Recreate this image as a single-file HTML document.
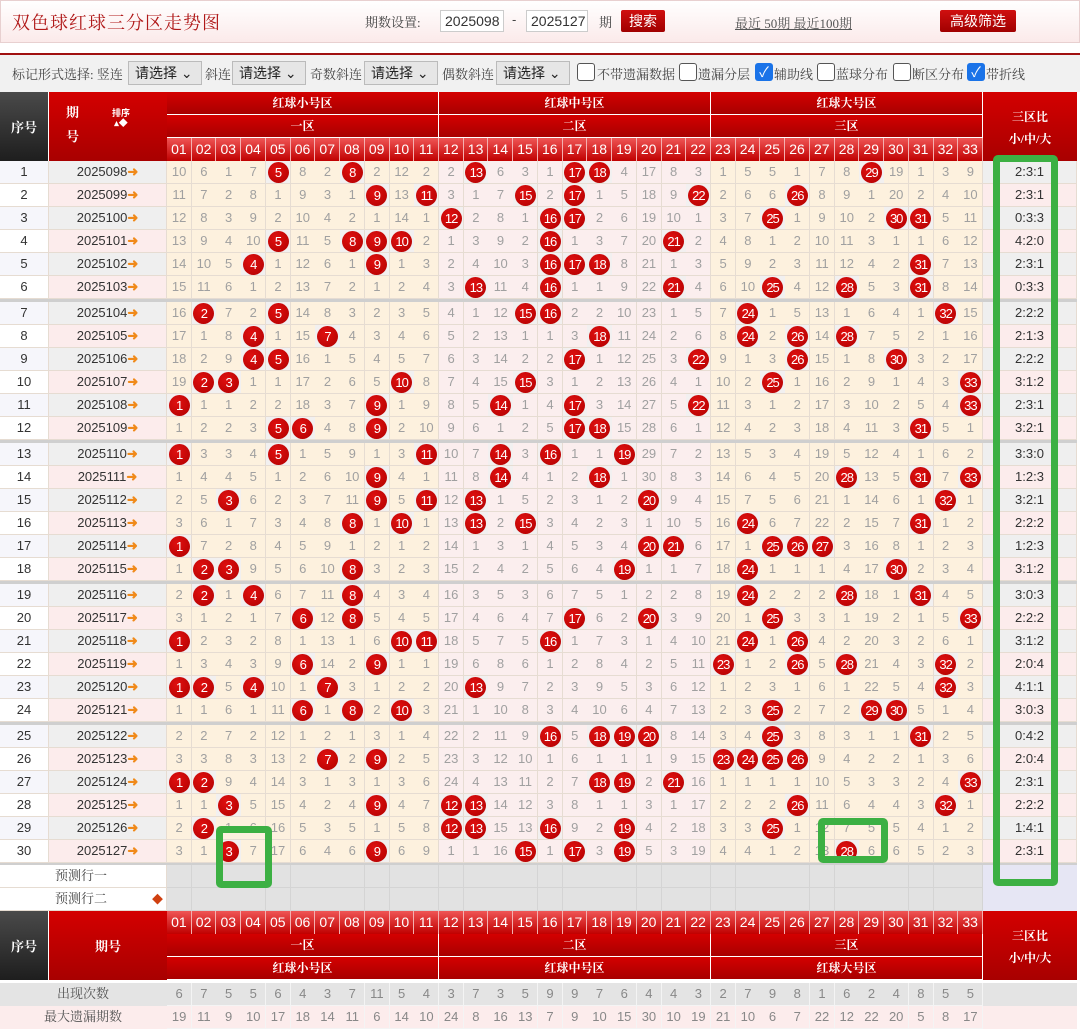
<!DOCTYPE html>
<html><head><meta charset="utf-8">
<style>
*{box-sizing:border-box;margin:0;padding:0}
body{width:1080px;height:1028px;position:relative;overflow:hidden;background:#fff;font-family:"Liberation Sans","Noto Sans CJK SC",sans-serif;font-size:13px;color:#333}
.a{position:absolute}
.sf{font-family:"Liberation Serif","Noto Serif CJK SC",serif}
.top{left:0;top:0;width:1080px;height:43px;background:linear-gradient(#fff,#fbeaea);border:1px solid #e8d0d0}
.title{left:12px;top:9px;font-size:18px;color:#b01818;letter-spacing:1px}
.inp{height:22px;border:1px solid #ccc;background:#fff;font-size:14px;line-height:20px;padding-left:4px;color:#333}
.btn{background:linear-gradient(#d01010,#a00000);color:#fff;text-align:center;border-radius:2px;font-size:14px}
.fb{left:0;top:53px;width:1080px;height:39px;background:#f1f1f1;border-top:2px solid #a01010}
.sel{height:24px;border:1px solid #bbb;background:#e6e6e6;font-size:14px;line-height:22px;padding-left:6px;color:#222}
.cb{width:18px;height:18px;border:1px solid #555;background:#fff;border-radius:3px}
.cbk{width:18px;height:18px;background:#1a73e8;border-radius:3px;color:#fff;font-size:14px;line-height:18px;text-align:center}
.hr{background:linear-gradient(#d40000,#a80000);color:#fff;text-align:center;font-weight:bold}
.hn{background:linear-gradient(#ef5555,#c00000);color:#fff;text-align:center;border-right:1px solid #f4b0b0;font-size:14px}
.c{position:absolute;text-align:center;color:#a0a0a0;border-right:1px solid #e6dcd2;border-bottom:1px solid #e6dcd2;line-height:22px;font-size:13px}
.b{display:inline-block;width:21px;height:21px;border-radius:50%;background:radial-gradient(circle at 40% 35%,#e01010,#b00000);color:#fff;line-height:21px;font-size:13px;letter-spacing:-1px;margin-top:1px}
.g{position:absolute;border:7px solid #3cb043;border-radius:5px}
</style></head><body>
<div class="a top"></div>
<div class="a title sf">双色球红球三分区走势图</div>
<div class="a sf" style="left:365px;top:12px;font-size:13px;color:#444">期数设置:</div>
<div class="a inp" style="left:440px;top:10px;width:64px">2025098</div>
<div class="a" style="left:512px;top:12px;color:#444">-</div>
<div class="a inp" style="left:526px;top:10px;width:62px">2025127</div>
<div class="a sf" style="left:599px;top:12px;color:#444">期</div>
<div class="a btn" style="left:621px;top:10px;width:44px;height:22px;line-height:22px">搜索</div>
<div class="a sf" style="left:735px;top:13px;color:#555;text-decoration:underline;font-size:13px">最近 50期 最近100期</div>
<div class="a btn" style="left:940px;top:10px;width:76px;height:22px;line-height:22px">高级筛选</div>
<div class="a fb"></div>
<div class="a sf" style="left:12px;top:64px;color:#444;font-size:13px">标记形式选择: 竖连</div>
<div class="a sel" style="left:128px;top:61px;width:74px">请选择 ⌄</div>
<div class="a sf" style="left:205px;top:64px;color:#444">斜连</div>
<div class="a sel" style="left:232px;top:61px;width:74px">请选择 ⌄</div>
<div class="a sf" style="left:310px;top:64px;color:#444">奇数斜连</div>
<div class="a sel" style="left:364px;top:61px;width:74px">请选择 ⌄</div>
<div class="a sf" style="left:442px;top:64px;color:#444">偶数斜连</div>
<div class="a sel" style="left:496px;top:61px;width:74px">请选择 ⌄</div>
<div class="a cb" style="left:577px;top:63px"></div><div class="a sf" style="left:597px;top:64px;color:#444">不带遗漏数据</div>
<div class="a cb" style="left:679px;top:63px"></div><div class="a sf" style="left:698px;top:64px;color:#444">遗漏分层</div>
<div class="a cbk" style="left:755px;top:63px">✓</div><div class="a sf" style="left:774px;top:64px;color:#444">辅助线</div>
<div class="a cb" style="left:817px;top:63px"></div><div class="a sf" style="left:836px;top:64px;color:#444">蓝球分布</div>
<div class="a cb" style="left:893px;top:63px"></div><div class="a sf" style="left:912px;top:64px;color:#444">断区分布</div>
<div class="a cbk" style="left:967px;top:63px">✓</div><div class="a sf" style="left:986px;top:64px;color:#444">带折线</div>
<div id="T"></div>
<script>
const D=[
"10 6 1 7 *5 8 2 *8 2 12 2 2 *13 6 3 1 *17 *18 4 17 8 3 1 5 5 1 7 8 *29 19 1 3 9|2:3:1",
"11 7 2 8 1 9 3 1 *9 13 *11 3 1 7 *15 2 *17 1 5 18 9 *22 2 6 6 *26 8 9 1 20 2 4 10|2:3:1",
"12 8 3 9 2 10 4 2 1 14 1 *12 2 8 1 *16 *17 2 6 19 10 1 3 7 *25 1 9 10 2 *30 *31 5 11|0:3:3",
"13 9 4 10 *5 11 5 *8 *9 *10 2 1 3 9 2 *16 1 3 7 20 *21 2 4 8 1 2 10 11 3 1 1 6 12|4:2:0",
"14 10 5 *4 1 12 6 1 *9 1 3 2 4 10 3 *16 *17 *18 8 21 1 3 5 9 2 3 11 12 4 2 *31 7 13|2:3:1",
"15 11 6 1 2 13 7 2 1 2 4 3 *13 11 4 *16 1 1 9 22 *21 4 6 10 *25 4 12 *28 5 3 *31 8 14|0:3:3",
"16 *2 7 2 *5 14 8 3 2 3 5 4 1 12 *15 *16 2 2 10 23 1 5 7 *24 1 5 13 1 6 4 1 *32 15|2:2:2",
"17 1 8 *4 1 15 *7 4 3 4 6 5 2 13 1 1 3 *18 11 24 2 6 8 *24 2 *26 14 *28 7 5 2 1 16|2:1:3",
"18 2 9 *4 *5 16 1 5 4 5 7 6 3 14 2 2 *17 1 12 25 3 *22 9 1 3 *26 15 1 8 *30 3 2 17|2:2:2",
"19 *2 *3 1 1 17 2 6 5 *10 8 7 4 15 *15 3 1 2 13 26 4 1 10 2 *25 1 16 2 9 1 4 3 *33|3:1:2",
"*1 1 1 2 2 18 3 7 *9 1 9 8 5 *14 1 4 *17 3 14 27 5 *22 11 3 1 2 17 3 10 2 5 4 *33|2:3:1",
"1 2 2 3 *5 *6 4 8 *9 2 10 9 6 1 2 5 *17 *18 15 28 6 1 12 4 2 3 18 4 11 3 *31 5 1|3:2:1",
"*1 3 3 4 *5 1 5 9 1 3 *11 10 7 *14 3 *16 1 1 *19 29 7 2 13 5 3 4 19 5 12 4 1 6 2|3:3:0",
"1 4 4 5 1 2 6 10 *9 4 1 11 8 *14 4 1 2 *18 1 30 8 3 14 6 4 5 20 *28 13 5 *31 7 *33|1:2:3",
"2 5 *3 6 2 3 7 11 *9 5 *11 12 *13 1 5 2 3 1 2 *20 9 4 15 7 5 6 21 1 14 6 1 *32 1|3:2:1",
"3 6 1 7 3 4 8 *8 1 *10 1 13 *13 2 *15 3 4 2 3 1 10 5 16 *24 6 7 22 2 15 7 *31 1 2|2:2:2",
"*1 7 2 8 4 5 9 1 2 1 2 14 1 3 1 4 5 3 4 *20 *21 6 17 1 *25 *26 *27 3 16 8 1 2 3|1:2:3",
"1 *2 *3 9 5 6 10 *8 3 2 3 15 2 4 2 5 6 4 *19 1 1 7 18 *24 1 1 1 4 17 *30 2 3 4|3:1:2",
"2 *2 1 *4 6 7 11 *8 4 3 4 16 3 5 3 6 7 5 1 2 2 8 19 *24 2 2 2 *28 18 1 *31 4 5|3:0:3",
"3 1 2 1 7 *6 12 *8 5 4 5 17 4 6 4 7 *17 6 2 *20 3 9 20 1 *25 3 3 1 19 2 1 5 *33|2:2:2",
"*1 2 3 2 8 1 13 1 6 *10 *11 18 5 7 5 *16 1 7 3 1 4 10 21 *24 1 *26 4 2 20 3 2 6 1|3:1:2",
"1 3 4 3 9 *6 14 2 *9 1 1 19 6 8 6 1 2 8 4 2 5 11 *23 1 2 *26 5 *28 21 4 3 *32 2|2:0:4",
"*1 *2 5 *4 10 1 *7 3 1 2 2 20 *13 9 7 2 3 9 5 3 6 12 1 2 3 1 6 1 22 5 4 *32 3|4:1:1",
"1 1 6 1 11 *6 1 *8 2 *10 3 21 1 10 8 3 4 10 6 4 7 13 2 3 *25 2 7 2 *29 *30 5 1 4|3:0:3",
"2 2 7 2 12 1 2 1 3 1 4 22 2 11 9 *16 5 *18 *19 *20 8 14 3 4 *25 3 8 3 1 1 *31 2 5|0:4:2",
"3 3 8 3 13 2 *7 2 *9 2 5 23 3 12 10 1 6 1 1 1 9 15 *23 *24 *25 *26 9 4 2 2 1 3 6|2:0:4",
"*1 *2 9 4 14 3 1 3 1 3 6 24 4 13 11 2 7 *18 *19 2 *21 16 1 1 1 1 10 5 3 3 2 4 *33|2:3:1",
"1 1 *3 5 15 4 2 4 *9 4 7 *12 *13 14 12 3 8 1 1 3 1 17 2 2 2 *26 11 6 4 4 3 *32 1|2:2:2",
"2 *2 1 6 16 5 3 5 1 5 8 *12 *13 15 13 *16 9 2 *19 4 2 18 3 3 *25 1 12 7 5 5 4 1 2|1:4:1",
"3 1 *3 7 17 6 4 6 *9 6 9 1 1 16 *15 1 *17 3 *19 5 3 19 4 4 1 2 13 *28 6 6 5 2 3|2:3:1"];
const CNT="6 7 5 5 6 4 3 7 11 5 4 3 7 3 5 9 9 7 6 4 4 3 2 7 9 8 1 6 2 4 8 5 5".split(" ");
const MX="19 11 9 10 17 18 14 11 6 14 10 24 8 16 13 7 9 10 15 30 10 19 21 10 6 7 22 12 22 20 5 8 17".split(" ");
const X0=167,W=24.727,RX=983,RW=94;
const cx=i=>X0+i*W;
let h="";
function d(s,st,t){h+=`<div class="a ${s}" style="${st}">${t||""}</div>`;}
function headers(top,rev){
 // top: y of first header row, 3 rows of 23
 const y1=top,y2=top+23,y3=top+46;
 const zr=rev?[y3,y2,y1]:[y1,y2,y3]; // zone name row, sub zone row, numbers row
 d("","left:0;top:"+top+"px;width:48px;height:69px;background:linear-gradient(#4a4a4a,#1e1e1e)","");
 d("sf","left:0;top:"+(top+25)+"px;width:48px;text-align:center;color:#fff;font-weight:bold;font-size:13px","序号");
 d("hr","left:49px;top:"+top+"px;width:118px;height:69px","");
 if(!rev){
  d("sf","left:66px;top:"+(top+10)+"px;color:#fff;font-weight:bold;font-size:13px","期");
  d("sf","left:66px;top:"+(top+34)+"px;color:#fff;font-weight:bold;font-size:13px","号");
  d("","left:112px;top:"+(top+16)+"px;color:#fff;font-size:9px;font-weight:bold;line-height:10px;text-align:center","排序<br>▴◆");
 } else d("sf","left:49px;top:"+(top+25)+"px;width:118px;text-align:center;color:#fff;font-weight:bold","期号");
 const zones=[["红球小号区","一区"],["红球中号区","二区"],["红球大号区","三区"]];
 for(let z=0;z<3;z++){
  const l=cx(z*11),w=W*11;
  d("hr sf","left:"+l+"px;top:"+zr[0]+"px;width:"+(w-1)+"px;height:22px;line-height:22px;font-size:12px",zones[z][0]);
  d("hr sf","left:"+l+"px;top:"+zr[1]+"px;width:"+(w-1)+"px;height:22px;line-height:22px;font-size:12px",zones[z][1]);
 }
 for(let i=0;i<33;i++){
  d("hn","left:"+cx(i)+"px;top:"+zr[2]+"px;width:"+W+"px;height:23px;line-height:23px",String(i+1).padStart(2,"0"));
 }
 d("hr sf","left:"+RX+"px;top:"+top+"px;width:"+RW+"px;height:69px;padding-top:14px;line-height:22px;font-size:12px","三区比<br>小/中/大");
}
headers(92,false);
let y=161;
for(let r=0;r<30;r++){
 if(r>0&&r%6==0){d("","left:0;top:"+y+"px;width:1077px;height:3px;background:#cfcfcf");y+=3;}
 const [nums,ratio]=D[r].split("|");const t=nums.split(" ");
 const alt=r%2==1;
 d("c","left:0;top:"+y+"px;width:49px;height:23px;color:#333;background:"+(alt?"#fff":"#f6f6fb"),String(r+1));
 d("c","left:49px;top:"+y+"px;width:118px;height:23px;color:#333;background:"+(alt?"#fcecec":"#efefef"),"2025"+(98+r<100?"0":"")+(98+r)+'<span style="color:#f08a1a;font-weight:bold">➜</span>');
 for(let i=0;i<33;i++){
  const z=Math.floor(i/11);const v=t[i];const ball=v[0]=="*";
  const bg=ball?"#f2f0f0":(z==1?"#fbeeee":"#fdf1de");
  d("c","left:"+cx(i)+"px;top:"+y+"px;width:"+(W+0.5)+"px;height:23px;background:"+bg,ball?'<span class="b">'+v.slice(1)+'</span>':v);
 }
 d("c","left:"+RX+"px;top:"+y+"px;width:"+RW+"px;height:23px;color:#333;background:"+(alt?"#fcecec":"#efefef"),ratio);
 y+=23;
}
d("","left:0;top:"+y+"px;width:1077px;height:2px;background:#cfcfcf");y+=2;
// prediction rows
for(let k=0;k<2;k++){
 d("c","left:0;top:"+y+"px;width:167px;height:23px;background:#fff;color:#444;text-align:left;padding-left:55px;font-family:'Liberation Serif','Noto Serif CJK SC',serif",k?"预测行二":"预测行一");
 if(k)d("","left:152px;top:"+(y+3)+"px;color:#d04010;font-size:11px","◆");
 for(let i=0;i<33;i++)d("c","left:"+cx(i)+"px;top:"+y+"px;width:"+(W+0.5)+"px;height:23px;background:#e2e2e2;border-color:#d4d4d4","");
 d("c","left:"+RX+"px;top:"+y+"px;width:"+RW+"px;height:23px;background:#e6e6f4;border-color:#e6e6f4","");
 y+=23;
}
headers(y,true);y+=72;
for(let k=0;k<2;k++){
 const bg=k?"#fcecec":"#e4e4e4";const arr=k?MX:CNT;
 d("c","left:0;top:"+y+"px;width:167px;height:23px;background:"+bg+";color:#555;font-family:'Liberation Serif','Noto Serif CJK SC',serif;border-color:"+bg,k?"最大遗漏期数":"出现次数");
 for(let i=0;i<33;i++)d("c","left:"+cx(i)+"px;top:"+y+"px;width:"+(W+0.5)+"px;height:23px;background:"+bg+";color:#888;border-color:#f4f4f4",arr[i]);
 d("c","left:"+RX+"px;top:"+y+"px;width:"+RW+"px;height:23px;background:"+bg+";border-color:"+bg,"");
 y+=23;
}
document.getElementById("T").innerHTML=h;
</script>
<div class="g" style="left:993px;top:155px;width:65px;height:731px"></div>
<div class="g" style="left:216px;top:826px;width:56px;height:62px"></div>
<div class="g" style="left:818px;top:818px;width:70px;height:45px"></div>
</body></html>
